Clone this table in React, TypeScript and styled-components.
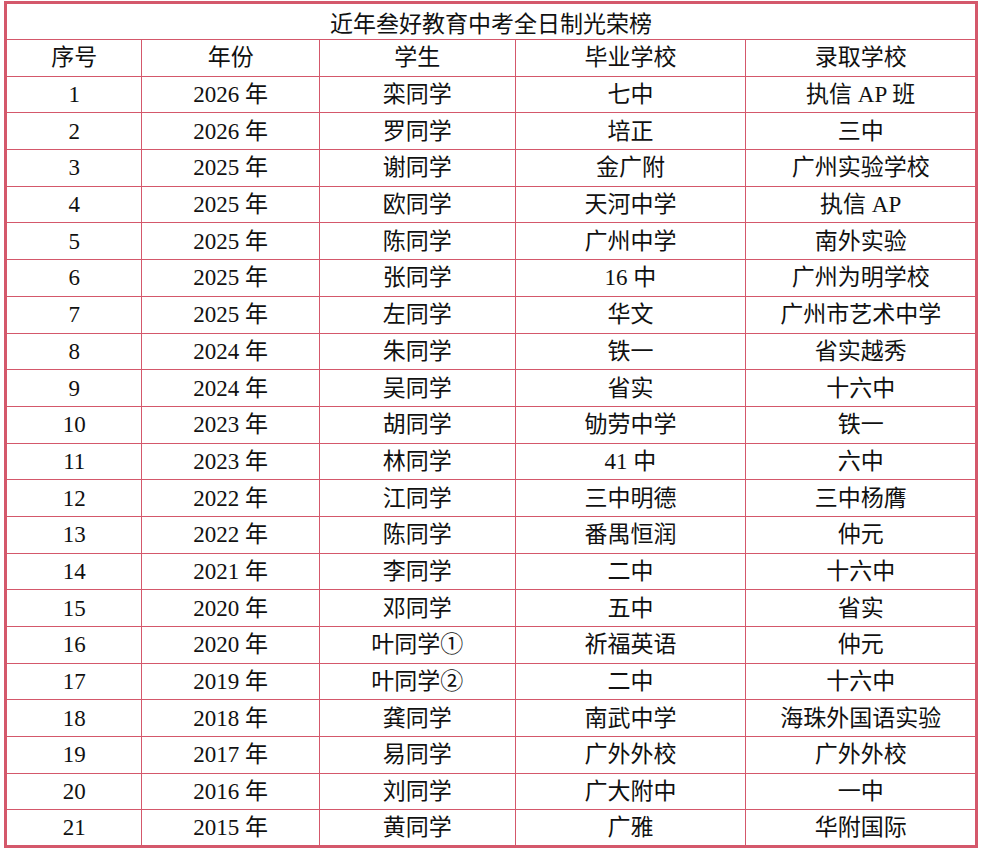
import styled, { createGlobalStyle } from "styled-components";

const LINE = "#d4586b";

const GlobalStyle = createGlobalStyle`
  html, body {
    margin: 0;
    padding: 0;
    background: #ffffff;
  }
`;

const Page = styled.div`
  padding: 1px 0 0 4px;
  font-family: "Liberation Serif", "Noto Sans CJK SC", serif;
  color: #111;
`;

const Table = styled.table`
  width: 974px;
  border-collapse: collapse;
  table-layout: fixed;
  border: 3px solid ${LINE};
`;

const TitleCell = styled.td`
  height: 35px;
  padding: 0;
  text-align: center;
  font-size: 23px;
  border: 1px solid ${LINE};
`;

const Row = styled.tr`
  height: 36.7px;
`;

const Cell = styled.td`
  padding: 0;
  text-align: center;
  vertical-align: middle;
  font-size: 23px;
  line-height: 1;
  border: 1px solid ${LINE};
  white-space: nowrap;
`;

const COLS = [136, 177, 195, 230, 230];
const HEAD = ["序号", "年份", "学生", "毕业学校", "录取学校"];

const ROWS: [string, string, string, string][] = [
  ["2026 年", "栾同学", "七中", "执信 AP 班"],
  ["2026 年", "罗同学", "培正", "三中"],
  ["2025 年", "谢同学", "金广附", "广州实验学校"],
  ["2025 年", "欧同学", "天河中学", "执信 AP"],
  ["2025 年", "陈同学", "广州中学", "南外实验"],
  ["2025 年", "张同学", "16 中", "广州为明学校"],
  ["2025 年", "左同学", "华文", "广州市艺术中学"],
  ["2024 年", "朱同学", "铁一", "省实越秀"],
  ["2024 年", "吴同学", "省实", "十六中"],
  ["2023 年", "胡同学", "劬劳中学", "铁一"],
  ["2023 年", "林同学", "41 中", "六中"],
  ["2022 年", "江同学", "三中明德", "三中杨膺"],
  ["2022 年", "陈同学", "番禺恒润", "仲元"],
  ["2021 年", "李同学", "二中", "十六中"],
  ["2020 年", "邓同学", "五中", "省实"],
  ["2020 年", "叶同学①", "祈福英语", "仲元"],
  ["2019 年", "叶同学②", "二中", "十六中"],
  ["2018 年", "龚同学", "南武中学", "海珠外国语实验"],
  ["2017 年", "易同学", "广外外校", "广外外校"],
  ["2016 年", "刘同学", "广大附中", "一中"],
  ["2015 年", "黄同学", "广雅", "华附国际"],
];

export default function App() {
  return (
    <Page>
      <GlobalStyle />
      <Table>
        <colgroup>
          {COLS.map((w, i) => (
            <col key={i} style={{ width: w }} />
          ))}
        </colgroup>
        <tbody>
          <tr>
            <TitleCell colSpan={5}>近年叁好教育中考全日制光荣榜</TitleCell>
          </tr>
          <Row>
            {HEAD.map((h) => (
              <Cell key={h}>{h}</Cell>
            ))}
          </Row>
          {ROWS.map((r, i) => (
            <Row key={i}>
              <Cell>{i + 1}</Cell>
              {r.map((c, j) => (
                <Cell key={j}>{c}</Cell>
              ))}
            </Row>
          ))}
        </tbody>
      </Table>
    </Page>
  );
}
